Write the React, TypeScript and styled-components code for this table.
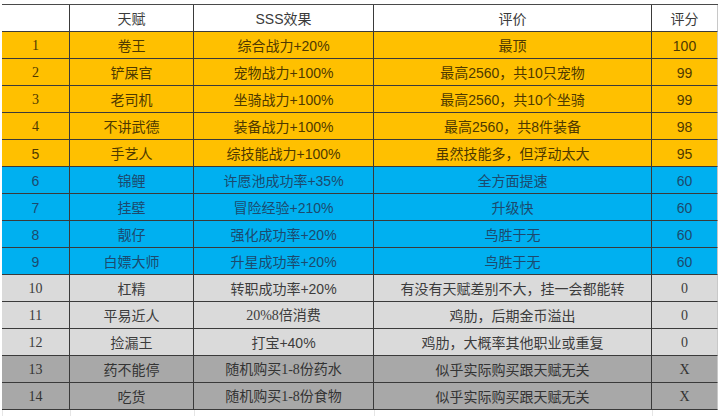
import styled, { createGlobalStyle } from "styled-components";

type Tone = "head" | "gold" | "blue" | "light" | "dark";

interface Talent {
  no: string;
  name: string;
  effect: string;
  review: string;
  score: string;
  tone: Tone;
  serifNo?: boolean;
  serifScore?: boolean;
}

const talents: Talent[] = [
  { no: "1", name: "卷王", effect: "综合战力+20%", review: "最顶", score: "100", tone: "gold", serifNo: true },
  { no: "2", name: "铲屎官", effect: "宠物战力+100%", review: "最高2560，共10只宠物", score: "99", tone: "gold", serifNo: true },
  { no: "3", name: "老司机", effect: "坐骑战力+100%", review: "最高2560，共10个坐骑", score: "99", tone: "gold", serifNo: true },
  { no: "4", name: "不讲武德", effect: "装备战力+100%", review: "最高2560，共8件装备", score: "98", tone: "gold", serifNo: true },
  { no: "5", name: "手艺人", effect: "综技能战力+100%", review: "虽然技能多，但浮动太大", score: "95", tone: "gold" },
  { no: "6", name: "锦鲤", effect: "许愿池成功率+35%", review: "全方面提速", score: "60", tone: "blue" },
  { no: "7", name: "挂壁", effect: "冒险经验+210%", review: "升级快", score: "60", tone: "blue" },
  { no: "8", name: "靓仔", effect: "强化成功率+20%", review: "鸟胜于无", score: "60", tone: "blue" },
  { no: "9", name: "白嫖大师", effect: "升星成功率+20%", review: "鸟胜于无", score: "60", tone: "blue" },
  { no: "10", name: "杠精", effect: "转职成功率+20%", review: "有没有天赋差别不大，挂一会都能转", score: "0", tone: "light", serifNo: true, serifScore: true },
  { no: "11", name: "平易近人", effect: "20%8倍消费", review: "鸡肋，后期金币溢出", score: "0", tone: "light", serifNo: true, serifScore: true },
  { no: "12", name: "捡漏王", effect: "打宝+40%", review: "鸡肋，大概率其他职业或重复", score: "0", tone: "light", serifNo: true, serifScore: true },
  { no: "13", name: "药不能停", effect: "随机购买1-8份药水", review: "似乎实际购买跟天赋无关", score: "X", tone: "dark", serifNo: true, serifScore: true },
  { no: "14", name: "吃货", effect: "随机购买1-8份食物", review: "似乎实际购买跟天赋无关", score: "X", tone: "dark", serifNo: true, serifScore: true },
];

const fills: Record<Tone, string> = {
  head: "#ffffff",
  gold: "#ffc000",
  blue: "#00b0f0",
  light: "#dadada",
  dark: "#a8a8a8",
};

const inks: Record<Tone, string> = {
  head: "#3a3a3a",
  gold: "#4e3900",
  blue: "#1c4a6e",
  light: "#3c3c3c",
  dark: "#333333",
};

const GlobalStyle = createGlobalStyle`
  html, body {
    margin: 0;
    padding: 0;
    background: #ffffff;
  }
`;

const Sheet = styled.div`
  width: 720px;
  height: 416px;
  padding: 4px 0 0 2px;
  box-sizing: border-box;
  overflow: hidden;
  background: #ffffff;
`;

const Table = styled.div`
  width: 716px;
  border-top: 1px solid #4a4a4a;
`;

const Row = styled.div<{ $tone: Tone }>`
  display: grid;
  grid-template-columns: 68px 124px 180px 278px 66px;
  height: 27px;
  background: ${(p) => fills[p.$tone]};
  color: ${(p) => inks[p.$tone]};
`;

const Cell = styled.div<{ $serif?: boolean; $last?: boolean }>`
  box-sizing: border-box;
  display: flex;
  align-items: center;
  justify-content: center;
  white-space: nowrap;
  border-bottom: 1px solid #3a3a3a;
  border-right: 1px solid ${(p) => (p.$last ? "#c8c8c8" : "#3a3a3a")};
  font-family: ${(p) =>
    p.$serif
      ? `"Liberation Serif", "Noto Sans CJK SC", serif`
      : `"Liberation Sans", "Noto Sans CJK SC", sans-serif`};
  font-size: 14px;
  line-height: 1;
  padding-top: 1px;
`;

const Spare = styled.div`
  display: grid;
  grid-template-columns: 68px 124px 180px 278px 66px;
  height: 7px;
`;

const SpareCell = styled.div`
  box-sizing: border-box;
  border-left: 1px solid #e6e6e6;
`;

export default function App() {
  return (
    <>
      <GlobalStyle />
      <Sheet>
        <Table>
          <Row $tone="head">
            <Cell />
            <Cell>天赋</Cell>
            <Cell>SSS效果</Cell>
            <Cell>评价</Cell>
            <Cell $last>评分</Cell>
          </Row>
          {talents.map((t) => (
            <Row key={t.no} $tone={t.tone}>
              <Cell $serif={t.serifNo}>{t.no}</Cell>
              <Cell>{t.name}</Cell>
              <Cell $serif={t.tone === "dark" || t.no === "11"}>{t.effect}</Cell>
              <Cell>{t.review}</Cell>
              <Cell $serif={t.serifScore} $last>
                {t.score}
              </Cell>
            </Row>
          ))}
        </Table>
        <Spare>
          {[0, 1, 2, 3, 4].map((i) => (
            <SpareCell key={i} />
          ))}
        </Spare>
      </Sheet>
    </>
  );
}
